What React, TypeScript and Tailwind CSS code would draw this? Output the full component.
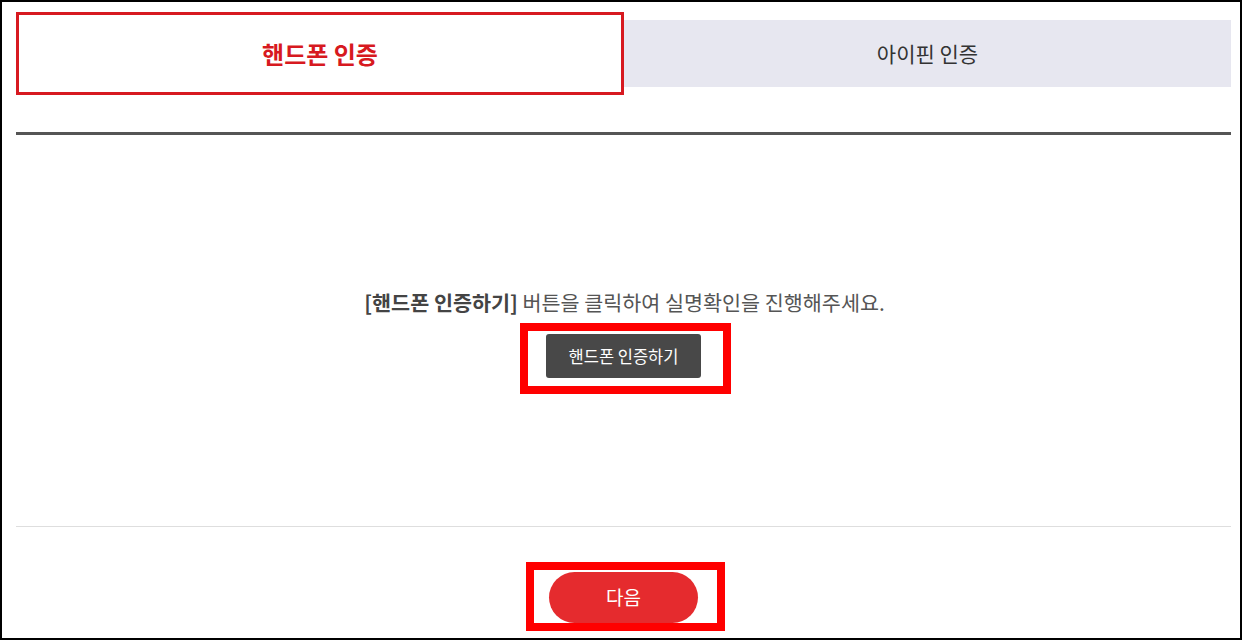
export default function App() {
  const font = { fontFamily: '"Noto Sans CJK KR", "Noto Sans", sans-serif' };
  return (
    <div
      className="w-[1242px] h-[640px] border-2 border-black bg-white pl-[14px] pr-[9px] pt-[10px] overflow-hidden"
      style={font}
    >
      <div className="flex items-center h-[83px]">
        <div className="w-[608px] h-[83px] border-[3px] border-[#d71920] flex items-center justify-center">
          <span className="text-[24px] font-bold text-[#d71920] leading-none">핸드폰 인증</span>
        </div>
        <div className="flex-1 h-[67px] bg-[#e7e7f0] flex items-center justify-center">
          <span className="text-[21px] text-[#333] leading-none">아이핀 인증</span>
        </div>
      </div>
      <div className="mt-[37px] h-[3px] bg-[#555]" />
      <div className="flex flex-col items-center">
        <p className="mt-[153px] ml-[2px] text-[20.7px] leading-[28px] text-[#555]">
          <b className="font-bold text-[#444]">[핸드폰 인증하기]</b> 버튼을 클릭하여 실명확인을 진행해주세요.
        </p>
        <div className="mt-[7px] ml-[4px] border-[8px] border-[#ff0000] pt-[3px] pl-[18px] pr-[22px] pb-[8px]">
          <button className="w-[155px] h-[44px] bg-[#484848] rounded-[3px] text-white text-[16.5px] flex items-center justify-center">
            핸드폰 인증하기
          </button>
        </div>
      </div>
      <div className="mt-[132px] h-px bg-[#dedede]" />
      <div className="flex justify-center">
        <div className="mt-[35px] ml-[4px] border-[8px] border-[#ff0000] pt-[2px] pl-[15px] pr-[19px]">
          <button className="w-[149px] h-[51px] rounded-full bg-[#e52b2e] text-white text-[19px] flex items-center justify-center">
            다음
          </button>
        </div>
      </div>
    </div>
  );
}
